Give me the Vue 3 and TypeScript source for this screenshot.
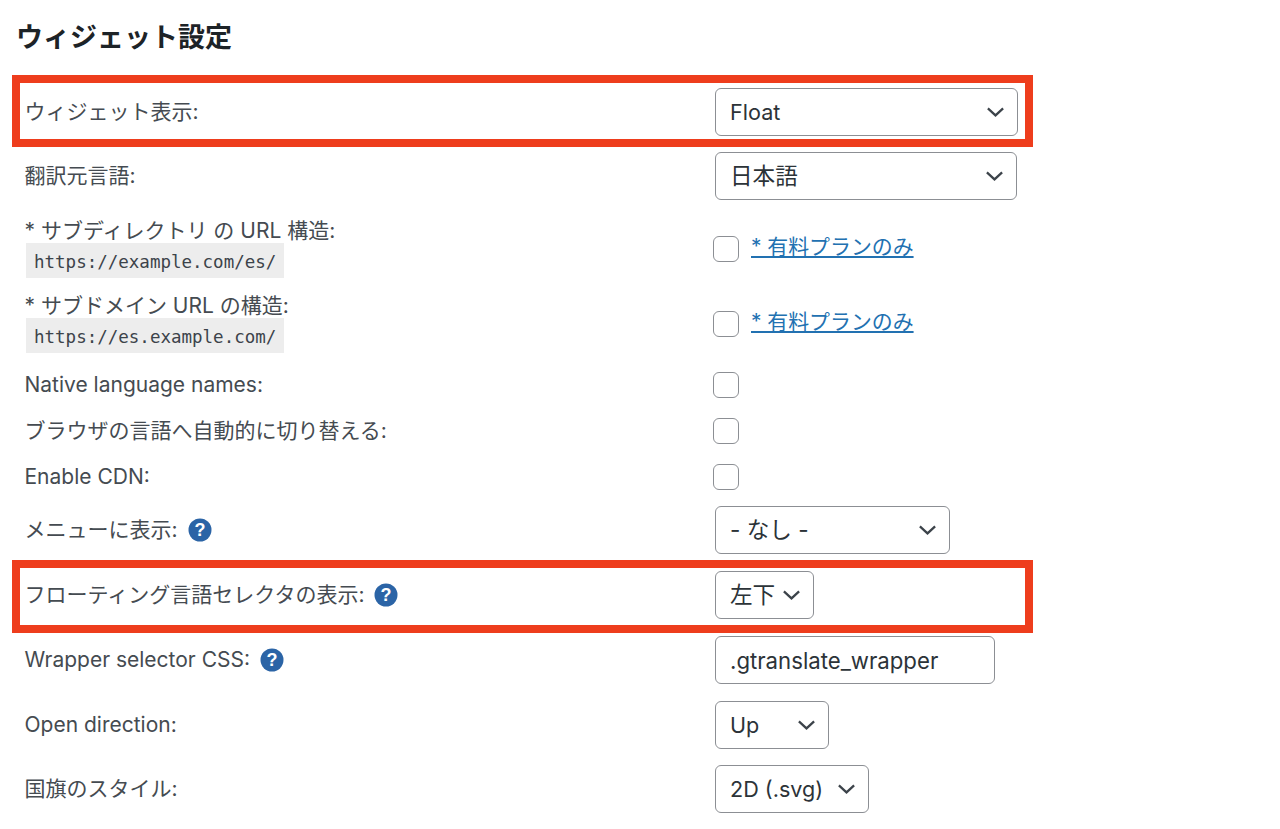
<script setup lang="ts">
interface Row {
  label: string
  code?: string
  help?: boolean
  kind: 'select' | 'check' | 'paid' | 'input'
  value?: string
  width?: number
  cjk?: boolean
}

const rows: Row[] = [
  { label: 'ウィジェット表示:', kind: 'select', value: 'Float', width: 303 },
  { label: '翻訳元言語:', kind: 'select', value: '日本語', width: 302, cjk: true },
  { label: '* サブディレクトリ の URL 構造:', code: 'https://example.com/es/', kind: 'paid' },
  { label: '* サブドメイン URL の構造:', code: 'https://es.example.com/', kind: 'paid' },
  { label: 'Native language names:', kind: 'check' },
  { label: 'ブラウザの言語へ自動的に切り替える:', kind: 'check' },
  { label: 'Enable CDN:', kind: 'check' },
  { label: 'メニューに表示:', help: true, kind: 'select', value: '- なし -', width: 235, cjk: true },
  { label: 'フローティング言語セレクタの表示:', help: true, kind: 'select', value: '左下', width: 99, cjk: true },
  { label: 'Wrapper selector CSS:', help: true, kind: 'input', value: '.gtranslate_wrapper', width: 280 },
  { label: 'Open direction:', kind: 'select', value: 'Up', width: 114 },
  { label: '国旗のスタイル:', kind: 'select', value: '2D (.svg)', width: 154 }
]
</script>

<template>
  <main class="page">
    <h2 class="title">ウィジェット設定</h2>
    <div class="form">
      <template v-for="row in rows" :key="row.label">
        <div class="label">
          <div class="label-line">
            <span>{{ row.label }}</span>
            <svg v-if="row.help" class="help" viewBox="0 0 24 24" aria-hidden="true">
              <circle cx="12" cy="12" r="11.5" fill="#2b64a6" />
              <text x="12" y="18" text-anchor="middle" class="help-mark">?</text>
            </svg>
          </div>
          <code v-if="row.code" class="code">{{ row.code }}</code>
        </div>
        <div class="control">
          <div v-if="row.kind === 'select'" class="select" :class="{ cjk: row.cjk }" :style="{ width: row.width + 'px' }">
            <span class="select-value">{{ row.value }}</span>
            <svg class="chevron" viewBox="0 0 20 12" aria-hidden="true">
              <path d="M2 2.2 L10 9.6 L18 2.2" fill="none" stroke="#3c434a" stroke-width="2.4" />
            </svg>
          </div>
          <div v-else-if="row.kind === 'input'" class="select input" :style="{ width: row.width + 'px' }">
            {{ row.value }}
          </div>
          <span v-else class="check"></span>
          <a v-if="row.kind === 'paid'" class="paid" href="#">* 有料プランのみ</a>
        </div>
      </template>
    </div>
    <div class="mark mark-one"></div>
    <div class="mark mark-two"></div>
  </main>
</template>

<style>
html, body {
  margin: 0;
  background: #fff;
}
</style>

<style scoped>
.page {
  position: relative;
  width: 1280px;
  height: 829px;
  overflow: hidden;
  background: #fff;
  font-family: Inter, "Noto Sans CJK JP", sans-serif;
  color: #454b51;
}
.title {
  margin: 0;
  padding: 20px 0 0 16px;
  height: 61px;
  box-sizing: border-box;
  font-size: 27px;
  line-height: 36px;
  font-weight: 700;
  color: #1d2327;
}
.form {
  display: grid;
  grid-template-columns: 690px 1fr;
  grid-template-rows: 54px 74px 71px 79px 44px 48px 44px 62px 68px 62px 68px 60px;
  padding: 24px 0 0 24.5px;
}
.label,
.control {
  display: flex;
  align-items: center;
}
.label {
  flex-direction: column;
  align-items: flex-start;
  justify-content: center;
  font-size: 21px;
  line-height: 24px;
}
.label-line {
  display: flex;
  align-items: center;
  gap: 10px;
}
.help {
  width: 24px;
  height: 24px;
  flex: none;
}
.help-mark {
  font-family: "Liberation Sans", sans-serif;
  font-size: 18px;
  font-weight: 700;
  fill: #fff;
}
.code {
  margin-left: 1.5px;
  padding: 0 8px;
  height: 35px;
  box-sizing: border-box;
  background: #ededed;
  font-family: "DejaVu Sans Mono", monospace;
  font-size: 17.5px;
  line-height: 38px;
  color: #3c434a;
}
.select {
  display: flex;
  align-items: center;
  justify-content: space-between;
  flex: none;
  height: 48px;
  box-sizing: border-box;
  margin-left: 0.5px;
  padding: 0 12px 0 14px;
  border: 1.5px solid #8c8f94;
  border-radius: 6px;
  background: #fff;
  font-size: 21.6px;
  color: #2c3338;
  white-space: nowrap;
}
.select.cjk {
  font-size: 22.6px;
}
.select.cjk .select-value {
  margin-bottom: 3px;
}
.chevron {
  width: 19px;
  height: 12px;
  flex: none;
}
.input {
  justify-content: flex-start;
  font-size: 22.2px;
}
.check {
  display: block;
  flex: none;
  width: 26px;
  height: 26px;
  box-sizing: border-box;
  margin-left: -1.5px;
  border: 1.5px solid #8c8f94;
  border-radius: 6px;
  background: #fff;
}
.paid {
  margin-left: 12px;
  margin-bottom: 4px;
  font-size: 20.9px;
  line-height: 28px;
  color: #2271b1;
  text-decoration: underline;
}
.mark {
  position: absolute;
  left: 12px;
  width: 1021px;
  box-sizing: border-box;
  border: 8px solid #ee3d1d;
  pointer-events: none;
}
.mark-one {
  top: 75px;
  height: 72px;
}
.mark-two {
  top: 560px;
  height: 73px;
}
</style>
